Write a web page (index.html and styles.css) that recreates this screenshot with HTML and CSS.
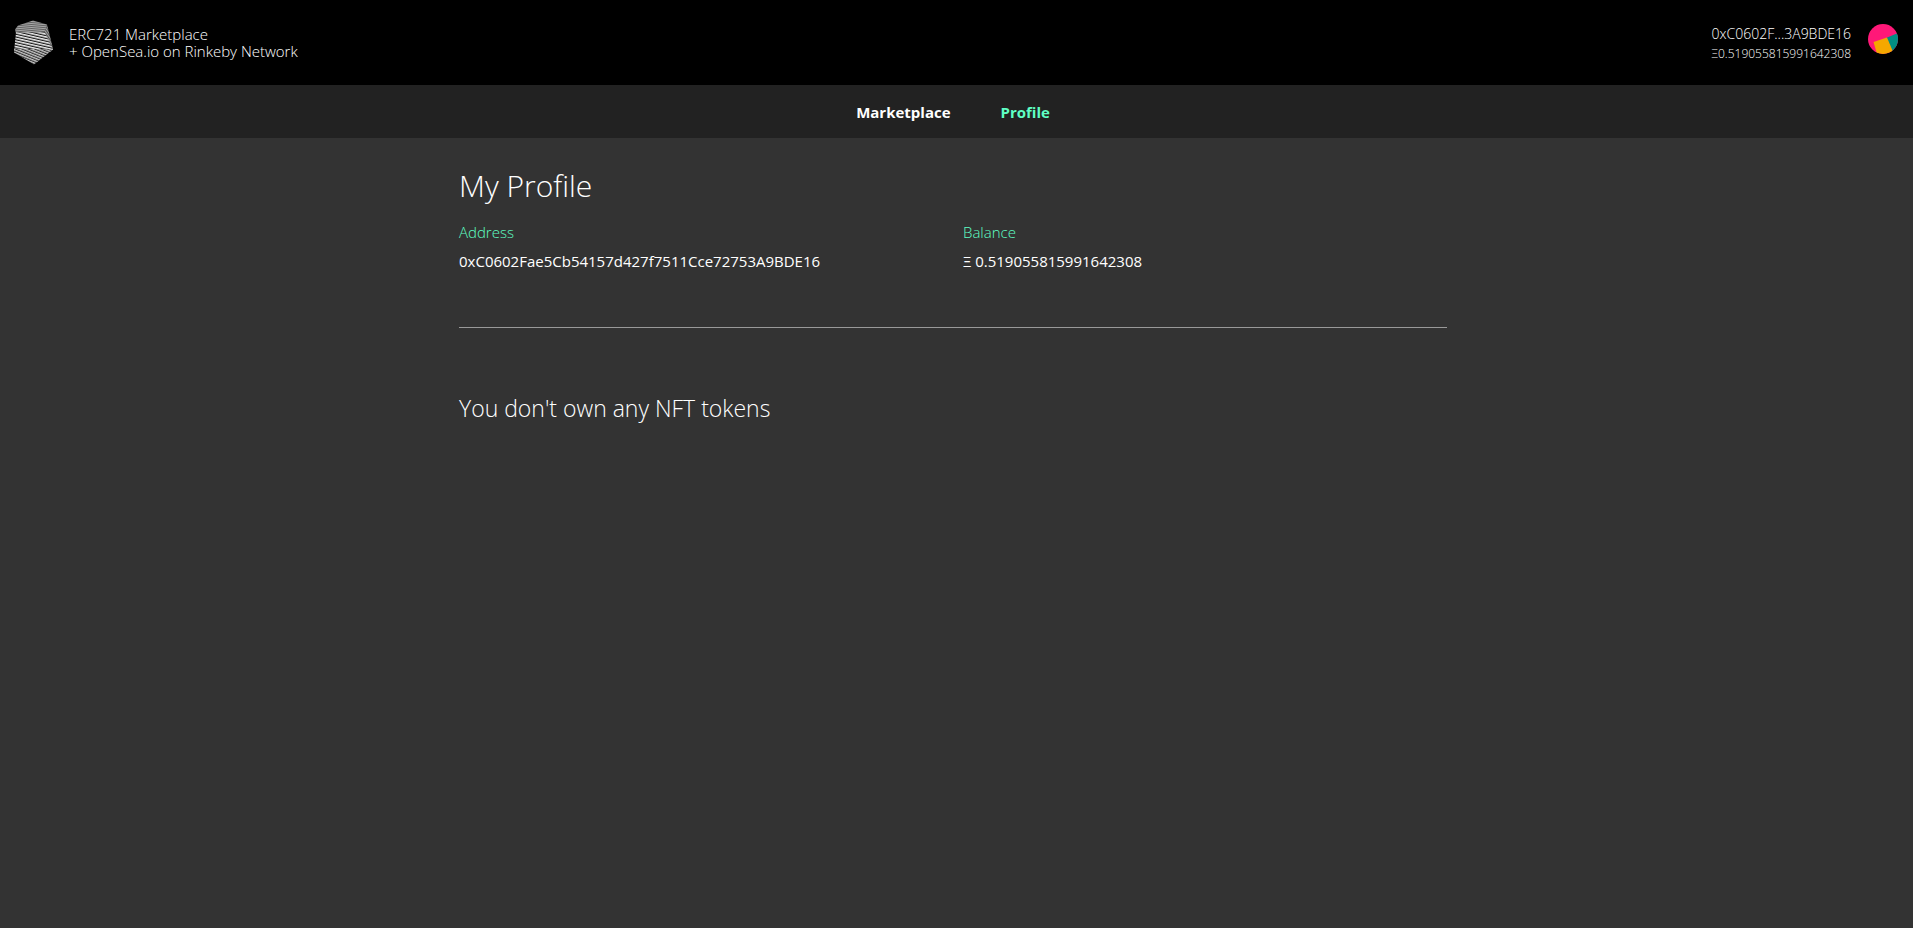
FILE: index.html
```html
<!DOCTYPE html>
<html lang="en">
<head>
<meta charset="utf-8">
<meta name="viewport" content="width=device-width, initial-scale=1">
<title>ERC721 Marketplace</title>
<link rel="stylesheet" href="styles.css">
</head>
<body>
<header class="header">
  <div class="brand">
    <svg class="brand-logo" viewBox="0 0 40 44" aria-hidden="true">
      <defs>
        <pattern id="top" width="8" height="2" patternUnits="userSpaceOnUse" patternTransform="rotate(-5)">
          <rect width="8" height="2" fill="#606060"/><rect width="8" height="1" fill="#a8a8a8"/>
        </pattern>
        <pattern id="front" width="8" height="2.7" patternUnits="userSpaceOnUse" patternTransform="rotate(13)">
          <rect width="8" height="2.7" fill="#181818"/><rect width="8" height="1.5" fill="#eee"/>
        </pattern>
        <pattern id="side" width="8" height="2" patternUnits="userSpaceOnUse" patternTransform="rotate(55)">
          <rect width="8" height="2" fill="#555"/><rect width="8" height="1" fill="#a0a0a0"/>
        </pattern>
        <pattern id="base" width="8" height="2.4" patternUnits="userSpaceOnUse" patternTransform="rotate(22)">
          <rect width="8" height="2.4" fill="#333"/><rect width="8" height="1.3" fill="#c4c4c4"/>
        </pattern>
      </defs>
      <path fill="url(#top)" d="M4 5 19 0 33 4 31 13 2 13 1 9Z"/>
      <path fill="url(#side)" d="M33 4 39 28 37 31 30 12Z"/>
      <path fill="url(#front)" d="M2 12 31 12 39 29 33 33 0 31Z"/>
      <path fill="url(#base)" d="M0 28 39 29 20 44 0 32Z"/>
    </svg>
    <div class="brand-name">ERC721 Marketplace<br>+ OpenSea.io on Rinkeby Network</div>
  </div>
  <div class="account">
    <div class="account-text">
      <div class="account-address">0xC0602F...3A9BDE16</div>
      <div class="account-balance">Ξ0.519055815991642308</div>
    </div>
    <svg class="avatar" viewBox="0 0 30 30" aria-hidden="true">
      <clipPath id="disc"><circle cx="15" cy="15" r="15"/></clipPath>
      <g clip-path="url(#disc)">
        <path fill="#ff1878" d="M0 0H30V30H0Z"/>
        <path fill="#018e83" d="M18 14 30 9V26L24 28Z"/>
        <path fill="#f5a800" d="M5.500 18 19 13.500 26 30H9Z"/>
      </g>
    </svg>
  </div>
</header>
<nav class="nav">
  <a class="nav-link" href="#marketplace">Marketplace</a>
  <a class="nav-link nav-link-active" href="#profile" aria-current="page">Profile</a>
</nav>
<main class="content">
  <h1 class="title">My Profile</h1>
  <dl class="details">
    <div>
      <dt class="label">Address</dt>
      <dd class="value">0xC0602Fae5Cb54157d427f7511Cce72753A9BDE16</dd>
    </div>
    <div>
      <dt class="label">Balance</dt>
      <dd class="value">Ξ 0.519055815991642308</dd>
    </div>
  </dl>
  <hr class="divider">
  <h2 class="empty">You don't own any NFT tokens</h2>
</main>
</body>
</html>
```
FILE: styles.css
```css
* { box-sizing: border-box; }

body {
  margin: 0;
  min-height: 100vh;
  background: #333;
  color: #fff;
  font-family: "Open Sans", "Noto Sans", sans-serif;
  font-size: 15px;
  line-height: 20px;
}

.header {
  display: flex;
  justify-content: space-between;
  align-items: flex-start;
  padding: 20px 15px 20px 14px;
  background: #000;
  font-weight: 300;
}

.brand {
  display: flex;
  align-items: center;
  gap: 15px;
}

.brand-logo { width: 40px; height: 45px; }

.brand-name { line-height: 17px; }

.account {
  display: flex;
  align-items: center;
  gap: 17px;
  padding-top: 4px;
  text-align: right;
}

.account-address { font-size: 14px; }

.account-balance { font-size: 12px; }

.avatar { width: 30px; height: 30px; margin-bottom: 10px; }

.nav {
  display: flex;
  justify-content: center;
  gap: 50px;
  padding: 17px 7px 16px 0;
  background: #222;
}

.nav-link {
  color: #fff;
  font-weight: 700;
  text-decoration: none;
}

.nav-link-active { color: #5fffc4; }

.content {
  max-width: 995px;
  margin: 0 auto;
  padding: 24px 7px 24px 0;
}

.title {
  margin: 0;
  font-size: 30px;
  font-weight: 300;
  line-height: 48px;
}

.details {
  display: grid;
  grid-template-columns: 1fr 1fr;
  gap: 20px;
  margin: 12px 0 56px;
}

.label { color: #5fffc4; font-weight: 300; }

.value { margin: 9px 0 0; }

.divider {
  margin: 0 0 64px;
  border: 0;
  border-top: 1px solid #999;
}

.empty {
  margin: 0;
  font-size: 23px;
  font-weight: 300;
  line-height: 32px;
}
```
